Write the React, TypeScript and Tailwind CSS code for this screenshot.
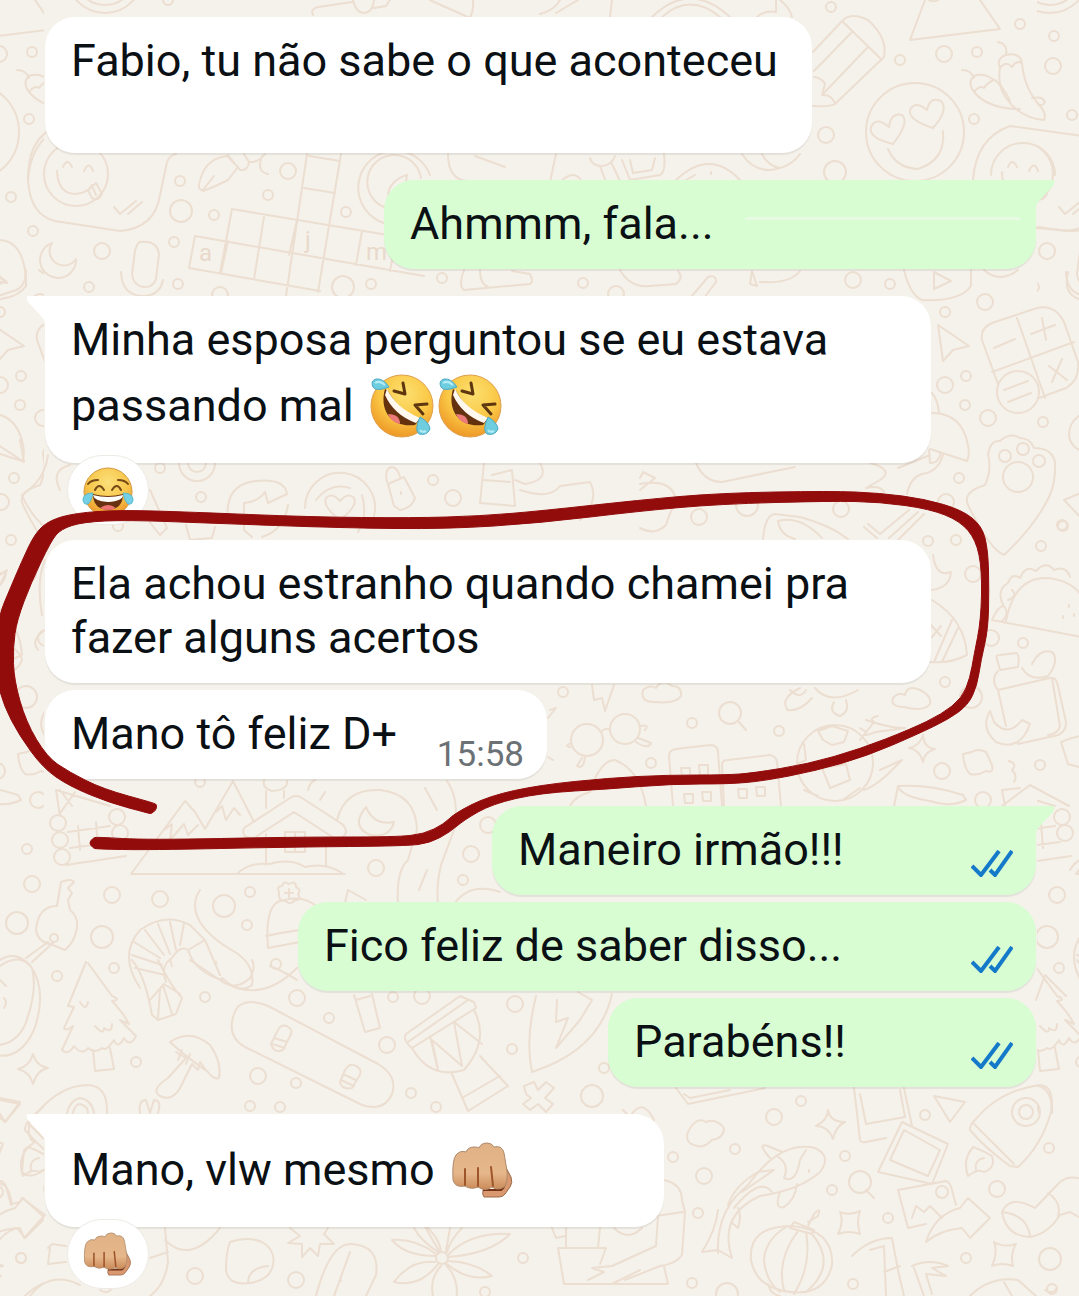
import React from 'react';
import clsx from 'clsx';

type Point = [number, number];

// Smooth closed outline through a ring of points
const outline = (points: Point[]) => {
  const mid = (a: Point, b: Point) => `${(a[0] + b[0]) / 2} ${(a[1] + b[1]) / 2}`;
  const last = points[points.length - 1];
  const curves = points.map((p, i) => `Q${p[0]} ${p[1]} ${mid(p, points[(i + 1) % points.length])}`);
  return `M${mid(last, points[0])} ${curves.join(' ')} Z`;
};

const markerPoints: Point[] = [
  [151, 814], [148, 813], [110, 803], [69, 786], [43, 768], [19, 735], [4, 706], [-3, 680], [-5, 650], [-1, 615], [10, 589],
  [21, 563], [35, 533], [50, 520], [76, 513], [120, 510], [189, 512], [310, 517], [413, 518], [480, 516], [540, 511],
  [640, 500], [720, 493], [830, 491], [880, 493], [925, 499], [962, 510], [982, 526], [988, 550], [989, 590], [988, 630],
  [981, 660], [977, 686], [968, 705], [949, 719], [918, 734], [867, 756], [815, 771], [763, 781], [729, 784], [671, 784],
  [609, 789], [540, 793], [492, 804], [464, 820], [450, 832], [430, 843], [406, 846], [293, 847], [148, 850], [97, 849],
  [93, 848], [89, 843], [93, 838], [97, 837], [148, 840], [293, 837], [396, 837], [424, 834], [444, 824], [455, 813],
  [489, 796], [540, 785], [609, 778], [667, 775], [726, 775], [753, 773], [808, 764], [860, 749], [911, 729], [942, 714],
  [962, 698], [970, 678], [974, 655], [981, 620], [982, 570], [976, 540], [960, 521], [930, 509], [880, 502], [830, 501],
  [720, 504], [640, 511], [540, 523], [448, 529], [344, 528], [207, 523], [127, 520], [83, 522], [61, 529], [51, 541],
  [31, 583], [17, 620], [13, 647], [14, 680], [26, 722], [47, 757], [69, 772], [103, 789], [154, 803], [157, 805], [156, 810],
];

const smallDots: Point[] = [
  [168, 0], [956, 197], [33, 231], [89, 287], [180, 181], [214, 215], [174, 242], [178, 284], [268, 195], [346, 212],
  [371, 284], [442, 278], [831, 7], [900, 60], [977, 52], [1020, 24], [1054, 36], [974, 119], [1072, 115], [583, 283],
  [890, 284], [945, 312], [966, 376], [965, 405], [1043, 422], [959, 478], [928, 541], [956, 540], [1023, 643], [945, 682],
  [1041, 546], [1062, 525], [201, 497], [160, 468], [433, 480], [118, 526], [27, 849], [250, 892], [247, 925], [114, 968],
  [57, 976], [276, 964], [463, 880], [200, 782], [563, 692], [692, 723], [779, 731], [651, 763], [1040, 765],
  [205, 997], [329, 1018], [136, 1062], [296, 1083], [393, 997], [411, 1093], [250, 1106], [280, 1107], [436, 1107],
  [512, 1049], [604, 1068], [21, 1258], [523, 1258], [485, 1292], [801, 1101], [925, 1115], [735, 1149], [673, 1157],
  [845, 1156], [832, 1190], [698, 1213], [888, 1218], [966, 1258], [692, 1283], [853, 1284], [1049, 1148], [1052, 1289],
];

const mediumDots: Point[] = [
  [102, 251], [288, 171], [220, 295], [944, 54], [1053, 66], [826, 135], [853, 280], [616, 294], [985, 302], [945, 385],
  [988, 418], [946, 502], [841, 509], [699, 517], [973, 574], [991, 638], [453, 498], [942, 771], [983, 800], [32, 884],
  [112, 895], [160, 899], [376, 868], [471, 854], [488, 825], [297, 998], [515, 1004], [387, 1045], [258, 1076],
  [774, 1117], [704, 1176], [997, 1189], [296, 1280], [195, 1276], [422, 996],
];

const largeDots: Point[] = [
  [181, 211], [343, 287], [835, 172], [747, 505], [971, 697], [224, 906], [17, 923], [102, 937], [592, 1096], [1050, 1259], [727, 1294],
];

const doodles = [
  // disc, pizza, pencil
  'M67 -25a38 38 0 0 0 76 0M75 -25a30 30 0 0 0 60 0',
  'M925 0L910 40L1000 29L980 0M926 -4a8 8 0 0 0 15 0',
  'M813 52L843 20Q852 12 868 20Q888 38 884 57L835 104Q830 107 813 106M843 22L880 58M852 32L814 71M868 47L822 95M814 77Q822 78 825 84L822 95Q832 94 835 104',
  'M313 15Q310 9 318 7L352 2M353 0Q356 13 364 13Q373 12 374 0M374 8L386 6L390 0M430 0L470 18Q474 10 473 0',
  'M540 14Q555 10 560 0M556 13L578 0M610 17L612 0M652 17Q690 -20 730 17M662 17Q690 -8 720 17M757 17Q765 10 776 12L776 0M780 0Q790 8 792 17',
  // chillies
  'M998 42Q1008 44 1006 54M1000 68Q996 58 1006 55Q1020 52 1022 63Q1016 60 1012 67Q1006 60 1000 68M1000 68Q997 85 1006 98Q1020 118 1044 120Q1047 114 1040 106Q1024 88 1022 63',
  'M962 70Q971 70 974 78M974 92Q967 82 974 76Q984 72 994 80Q988 82 984 88Q980 85 974 92M974 92Q988 109 1020 109M995 80Q1004 88 1010 101M1032 98Q1043 96 1045 102Q1042 107 1038 104',
  // heart eyed face
  'M866 132a49 49 0 1 0 98 0a49 49 0 1 0 -98 0M893 144Q868 138 871 127Q876 116 889 127Q891 112 902 115Q910 122 893 144M933 128Q908 120 910 110Q915 100 927 110Q930 96 941 101Q949 110 933 128M888 149Q896 168 918 169Q946 160 943 131',
  // speech bubble with tongue face
  'M50 130Q28 142 28 180Q30 215 55 221L120 231Q155 228 160 195L167 162Q170 155 176 154M44 174a32 32 0 1 0 64 0a32 32 0 1 0 -64 0M57 171Q58 194 76 194Q88 193 92 185M63 167Q67 157 72 167M84 171Q89 160 93 171M88 190L96 183L102 194Q98 202 92 198Z M93 188L96 195',
  'M114 207L120 214L136 201M128 214L142 202',
  'M973 180Q976 138 1010 126L1083 136M991 175a32 32 0 1 1 64 0M1002 172Q1002 192 1020 194M1008 167Q1012 157 1017 167M1029 171Q1034 160 1038 171M1036 228L1073 231Q1080 231 1085 229',
  // pen nib
  'M200 189Q197 187 203 172Q210 158 227 156L238 167L228 180Q212 188 203 191ZM203 190L214 176M228 155L240 170Q248 171 249 162L244 154M249 162Q258 163 265 154M262 156Q256 172 268 174',
  // crossword
  'M307 154L286 296M341 154L318 292M309 156L340 161M304 188L335 193M232 209L424 241M195 236L424 276M189 268L320 291M232 209L220 273M264 217L254 279M195 236L189 268M362 231L356 265M396 238L390 271M228 241L221 273M297 220L289 255',
  'M52 243a18 18 0 1 0 24 16a14 14 0 0 1 -24 -16',
  'M140 242Q157 240 159 254L156 279Q153 288 143 287Q133 285 132 274L135 251Q137 243 140 242M121 272Q122 295 142 296Q160 296 163 280',
  'M-5 240Q18 238 24 265Q30 288 10 292L-5 297M-5 272L7 283L-5 281',
  'M430 175a37 37 0 1 0 -46 48M421 178a27 27 0 1 0 -34 30M388 195Q390 180 407 175L405 188M448 154Q448 180 468 181M475 156L505 167',
  'M556 154L550 182M590 158Q592 166 602 166Q612 165 615 156M600 166L606 182M612 164L620 181M560 182Q575 168 582 182M622 160L630 180L660 175Q666 172 664 154M630 160L633 173L652 170L655 158M676 180Q710 148 740 180M686 180L695 175M711 172V174M742 154Q752 170 770 170Q790 168 800 154M762 154Q768 166 780 168',
  'M464 270Q458 286 464 290L530 284Q534 282 530 274L512 271M480 270Q480 284 488 287M620 270Q630 288 650 286L676 284Q684 278 678 271M692 296L708 277Q716 274 716 282L704 298M752 271L757 286L750 284ZM760 282Q790 284 800 271M904 270Q910 295 922 300Q960 302 971 286V270M934 272L951 281L934 289ZM984 270Q1000 284 1018 270',
  'M1068 272Q1062 295 1082 300',
  // cursor, calculator
  'M938 325L969 346L953 350L943 361Z',
  'M998 384L982 340Q980 328 992 323L1037 308Q1055 304 1064 322L1078 362Q1080 380 1066 388L1039 398M1017 318L1045 398M992 372L1074 342M994 348L1015 339M1042 318L1046 340M1031 334L1055 325M1049 366L1067 380M1052 382L1062 359M997 392a21 21 0 1 0 42 0a21 21 0 1 0 -42 0M1004 390L1028 381M1008 402L1031 393M1080 415Q1066 425 1070 440Q1074 449 1084 452',
  // umbrella, paw
  'M932 413Q962 413 968 445Q970 455 967 461L930 449M932 393Q938 400 939 413M929 450L930 463Q938 464 941 453M943 455Q938 472 922 474Q910 478 907 494M898 468L930 455',
  'M988 455Q990 440 1000 441Q1010 432 1020 438Q1030 438 1034 448Q1052 448 1055 462Q1056 480 1050 495Q1036 525 1004 555Q990 550 968 505Q962 492 985 485Q992 470 988 455M1003 477a15 15 0 1 0 30 0a15 15 0 1 0 -30 0M999 456a6 6 0 1 0 12 0a6 6 0 1 0 -12 0M1017 449a6 6 0 1 0 12 0a6 6 0 1 0 -12 0M1033 461a6 6 0 1 0 12 0a6 6 0 1 0 -12 0M1083 492L1064 500L1083 520',
  // taco
  'M992 620L1082 637M1006 621Q1014 578 1046 578Q1074 580 1084 600M992 620Q998 606 1004 606Q1010 614 1002 621M1003 605Q996 590 1008 583Q1012 572 1020 578Q1026 564 1036 571Q1046 560 1054 570Q1066 565 1070 577M1012 590Q1018 596 1008 600M1069 605V607M1063 616V618M1074 614V616',
  // jar and banana
  'M997 659Q995 655 1000 655L1016 653Q1020 654 1018 667L1000 670ZM998 671Q990 680 998 690L1050 678Q1056 676 1058 686L1066 722Q1066 734 1054 736L1018 744M1022 668Q1030 682 1048 676Q1060 660 1052 652Q1040 648 1032 664M998 690L1006 726M1052 678L1060 726Q1058 734 1048 735M990 711Q980 728 996 742Q1020 752 1030 724L1022 720Q1008 738 994 722Z',
  'M932 600Q965 620 967 655Q950 664 930 662M952 620L934 662M958 628L942 662M931 625L941 636M941 626L932 637M933 555Q936 578 951 572Q950 588 931 590',
  'M763 539Q765 515 775 514L800 517Q830 525 848 539M778 521Q800 515 822 538M778 521Q780 535 795 539M864 527L877 538M868 524L880 534L909 510M889 538L918 512M898 540L924 514M696 463Q704 482 722 482L795 467M870 463Q895 470 880 480L866 488Q880 485 884 492M640 478L643 472L655 478L640 490M640 484Q672 478 676 500Q670 512 666 525Q655 536 640 528',
  // sticker row under the long message
  'M179 463a18 18 0 0 0 36 0M188 463a9 9 0 0 0 18 0M228 520Q224 485 255 481Q285 478 287 494L268 503L265 492Q258 502 244 503M244 503V530L252 537M288 505Q284 530 262 537M305 508a35 35 0 1 1 69 8M316 500Q330 482 350 488M340 520Q322 506 326 498Q332 492 340 501Q348 492 354 498Q358 506 340 520M362 495Q368 515 358 532',
  'M388 484L404 477L415 498Q412 508 400 510L394 506ZM387 482Q384 468 392 467Q398 468 400 477M401 492V494M484 463L480 503L515 506L512 470L492 475M484 480L510 482M540 463Q550 480 525 484L515 480M520 490Q550 500 560 486L590 482Q600 500 580 520',
  'M48 455Q45 480 22 495Q30 515 48 530M70 465Q50 470 60 490M150 490L167 528L160 535L148 520M186 525L190 540L212 538L215 527M-2 445L24 462L20 440',
  'M-4 578L7 570L0 585M45 560Q36 580 42 615M45 630Q30 640 38 650M0 640Q20 650 22 660Q18 672 0 676',
  // clouds, glasses, loupe
  'M654 702Q640 702 643 690Q650 684 656 688Q662 678 672 686Q682 686 681 696Q676 704 654 702M904 707Q890 707 893 698Q898 692 905 695Q908 684 920 690Q932 696 930 704Q924 712 904 707M719 713a11 11 0 1 0 22 0a11 11 0 1 0 -22 0M739 722L746 730',
  'M571 740a16 16 0 1 0 32 0a16 16 0 1 0 -32 0M610 729a15 15 0 1 0 30 0a15 15 0 1 0 -30 0M602 731Q606 727 610 730M571 743Q564 746 570 747M582 758L577 766Q584 770 585 756M640 726Q650 724 645 730M638 738L651 743Q648 750 636 742M592 685L594 700L602 698L605 711L614 685M550 710L556 708L548 718M548 757L553 760',
  'M673 806L669 756Q669 750 676 749L710 745Q718 745 718 752L722 806M724 806L722 765Q722 760 728 760L770 755Q776 756 777 762L781 806M681 768H690V776H682ZM699 765H708V775H700ZM684 794H693V803H685ZM702 792H711V801H703ZM738 789H747V798H739ZM756 787H765V796H757ZM570 806Q575 796 590 792Q600 760 615 760Q640 770 646 806',
  'M797 763a38 38 0 1 0 76 0a38 38 0 1 0 -76 0M818 731L832 726L848 731L844 742L832 745L823 740ZM822 768L846 764L850 780L830 788ZM797 764L806 760L804 744M804 790L818 796M844 799L860 788M860 740L874 722Q868 718 878 716M860 728L866 732Q860 738 876 732L905 728M866 720Q890 728 903 728M880 770L902 760L888 774Q870 790 862 790M790 690Q800 700 806 690M787 709Q780 698 800 688M787 710Q800 712 812 698M834 702Q828 712 840 716Q850 712 846 700M815 688Q830 706 858 690',
  'M923 735Q924 748 935 749Q924 752 923 762Q920 750 909 748Q920 746 923 735M963 754L972 752Q978 748 986 752L992 765Q994 774 986 771Q978 776 970 774Q964 768 963 754M1009 761Q1018 764 1012 770Q1018 776 1014 782',
  'M894 806L898 786Q930 784 963 795L966 800Q950 808 930 801Q900 796 898 786M1002 790L1020 788M1005 806L1002 790M1002 806L1030 785L1069 806M1061 742Q1076 736 1082 736M1061 742L1068 764L1082 768',
  // log cabin in the mountains
  'M50 823a8 8 0 1 0 16 0a8 8 0 1 0 -16 0M52 840a8 8 0 1 0 16 0a8 8 0 1 0 -16 0M54 857a8 8 0 1 0 16 0a8 8 0 1 0 -16 0M109 817a8 8 0 1 0 16 0a8 8 0 1 0 -16 0M112 833a8 8 0 1 0 16 0a8 8 0 1 0 -16 0M60 816L56 790L110 806M60 790L72 806M68 832L110 826M70 848L115 842M66 865L126 856M78 826L80 850M96 822L98 848M59 815L75 792',
  'M131 874H345M131 874L185 801L195 812L205 829L233 781L254 822M164 830L172 824L170 840L184 824L188 835L198 825M216 812L222 806L226 820L234 808L240 815M244 828L290 798Q296 794 302 798L342 824Q350 832 342 838L334 838L294 812L254 838Q240 838 244 828M266 834V865M326 838V865M238 873Q250 862 270 864Q290 858 305 867Q325 862 342 873M264 780Q262 788 272 791Q288 790 287 781M266 791V808M284 791V798M285 832H305V852H285ZM295 832V852M285 842H305',
  'M337 820Q345 788 380 790Q416 794 417 830Q412 845 408 860Q396 870 398 905M447 781Q460 800 454 830L441 865Q436 885 438 905M366 807Q350 826 370 835Q390 838 394 822Q374 826 366 807M308 790Q310 782 315 780M320 800L325 792M425 788L437 810M427 870L419 890M345 903L348 890L366 900M455 903Q470 882 500 892',
  // key and ring
  'M61 882L57 906Q38 906 36 930Q38 942 50 944L65 950Q74 942 76 932Q80 918 70 910L68 900L72 893L68 888L74 882Q72 878 61 882M50 938a4 4 0 1 0 8 0a4 4 0 1 0 -8 0M54 942L32 962M48 942L26 958M0 960Q15 950 30 965Q48 990 34 1030Q20 1060 -4 1055M0 966Q20 952 32 968Q38 990 25 1025Q15 1045 -4 1045M-2 978L6 986M4 1008Q8 1002 4 998',
  // prawn on a hook
  'M200 890Q190 905 200 922Q210 938 235 952Q255 965 252 985Q240 995 222 978M140 988Q118 955 140 930Q165 912 190 925L205 940L220 975M205 940L188 950Q180 945 172 958Q160 965 166 982M135 968L165 975M132 955L162 965M134 942L160 958M145 930L164 955M158 924L170 954M170 922L176 950M184 923L180 945M188 950Q195 972 222 980M216 962V964',
  // bobble hat
  'M268 948Q264 900 285 900Q305 895 318 908M266 936Q284 932 300 930M268 948L300 942M279 892Q276 886 282 886Q284 880 289 884Q296 880 296 887Q302 890 298 894Q302 900 295 900Q290 906 286 901Q278 902 279 892M289 889V897M285 893H293M270 966Q285 972 297 980',
  // pine tree
  'M86 962L68 1006L74 1007L64 1028Q66 1032 73 1026L62 1050Q68 1056 74 1046Q82 1056 88 1048Q95 1054 102 1048Q106 1052 114 1040Q118 1050 124 1038Q130 1048 136 1036L120 1020L129 1024Q124 1014 112 1001Q122 1000 112 996L88 963M93 1050L95 1071L114 1069L110 1048M80 1002Q86 1012 88 1002M95 1026Q104 1036 104 1028Q112 1034 112 1024',
  'M33 1054Q36 1066 48 1068Q37 1070 33 1084Q30 1072 18 1069Q30 1066 33 1054ZM35 1115Q60 1085 88 1085Q108 1086 107 1113M67 1113Q70 1100 80 1098Q92 1100 94 1113M73 1113Q75 1104 80 1104Q88 1106 88 1113M140 1113Q138 1100 146 1100L150 1113L154 1100Q162 1100 158 1113M0 1100L20 1104L5 1122L-4 1114M30 1120Q26 1140 35 1142L24 1150L22 1172Q30 1180 44 1170M-4 1184Q8 1180 12 1204L20 1202L22 1198L45 1215L24 1238L20 1228Q8 1228 -4 1244',
  // shuttlecock
  'M132 960Q145 975 152 1015L158 1020L176 1014L182 998Q170 985 158 960M150 1000L164 984L180 994M163 985L172 1014M160 990L158 1018M170 960L172 966M190 960L220 980Q235 992 250 978Q256 968 252 960M232 986Q265 1000 297 968',
  // mushroom
  'M170 1042Q190 1028 210 1045Q222 1062 219 1078Q214 1080 208 1072Q185 1056 170 1042M176 1052L186 1058L168 1078Q150 1090 160 1096Q172 1102 180 1088L192 1064L198 1070L200 1062L206 1070M182 1050L178 1060M190 1054L186 1064',
  // skateboard
  'M240 1005Q252 998 272 1008L378 1064Q398 1076 392 1094Q384 1112 362 1105L245 1047Q226 1036 234 1014Q236 1008 240 1005M277 1032Q280 1024 287 1026Q294 1030 290 1036L283 1050Q274 1054 271 1044ZM274 1038L287 1042M272 1044L285 1048M345 1070Q350 1062 356 1066Q364 1070 358 1078L352 1088Q342 1090 340 1082ZM343 1074L356 1080M341 1080L354 1086',
  // djembe
  'M354 995L365 1032L380 1028L372 994M356 1000L370 996M406 1034L460 996L474 1002L476 1008L412 1048Q402 1040 406 1034M408 1042L468 1000M412 1048Q430 1080 464 1070M474 1010Q490 1040 464 1070M430 1036L438 1070L432 1040L462 1066L454 1022L482 1044M452 1074L468 1111L508 1086L480 1056M462 1098L500 1076',
  'M536 996Q525 1040 532 1072Q600 1050 612 994M557 1000L556 1022L568 1018L556 1048L580 1020L592 1000L578 992M526 1094L524 1086L534 1082L538 1090L546 1082L554 1088L545 1098L553 1104L546 1112L538 1104L530 1110L523 1104L531 1098Z',
  // flower, star, pepper
  'M436 1258a6 6 0 1 0 12 0a6 6 0 1 0 -12 0M439 1251Q415 1210 428 1228M438 1252Q420 1240 414 1228M446 1251L450 1228M436 1256Q405 1256 392 1240Q415 1238 436 1254M435 1262Q410 1260 394 1282Q420 1288 438 1264M441 1266Q428 1280 434 1300M446 1265Q460 1280 456 1300M448 1261Q475 1262 492 1276Q468 1282 447 1264M448 1255Q470 1232 510 1234Q490 1254 448 1257M428 1228Q440 1240 441 1252M462 1228Q450 1240 447 1252M290 1228L300 1236L288 1243L302 1244L302 1257L310 1248L318 1256L320 1244L334 1244L324 1234L328 1228M230 1242Q248 1236 262 1242Q276 1250 273 1265Q270 1280 250 1283Q228 1286 226 1270Q226 1252 230 1242M248 1283Q248 1268 268 1266M316 1296Q330 1242 352 1244Q380 1246 376 1275L366 1296M334 1296L350 1252M341 1280V1281M165 1228L168 1262Q165 1285 150 1296M150 1258L168 1252M165 1240Q190 1265 220 1228M48 1248L52 1244L66 1246M50 1248L48 1264L66 1262M30 1296Q50 1270 80 1285M100 1290Q108 1295 112 1288',
  // orca
  'M718 1253Q716 1210 748 1185Q780 1140 815 1148Q832 1156 820 1172Q800 1190 760 1196Q718 1215 732 1258L718 1250L702 1252Q716 1230 718 1210M770 1158Q756 1142 768 1146L782 1152M777 1156Q790 1164 784 1178Q796 1184 800 1160L806 1150M742 1192L774 1170L758 1172Q735 1185 728 1205M734 1208Q760 1176 772 1192M780 1192Q774 1210 784 1207Q795 1200 797 1184M731 1222L738 1228Q742 1216 738 1208M809 1170V1172',
  // lantern
  'M751 1260Q748 1226 792 1226Q834 1230 832 1265Q825 1296 790 1292Q756 1288 751 1260M794 1222L814 1230L812 1234L790 1228ZM808 1226L814 1214Q822 1206 818 1216L808 1222M786 1227Q765 1240 764 1260Q766 1282 780 1292M798 1231Q776 1260 784 1290M806 1232Q812 1265 794 1294M812 1234Q838 1265 806 1292M768 1284Q770 1294 780 1296',
  'M828 1110Q830 1122 845 1122Q836 1126 833 1139Q828 1126 816 1126Q828 1120 828 1110M840 1212Q850 1216 860 1211Q856 1222 860 1234Q848 1230 838 1234Q844 1222 840 1212M994 1242Q1004 1248 1016 1244Q1010 1254 1013 1266Q1002 1262 992 1266Q998 1252 994 1242M698 1146Q684 1144 688 1132Q696 1116 706 1122Q716 1118 724 1128Q724 1138 712 1140Q704 1148 698 1146M849 1182a11 11 0 1 0 22 0a11 11 0 1 0 -22 0M866 1190L874 1198',
  // photos
  'M854 1088L860 1140Q861 1143 866 1142L886 1138M904 1088L912 1126M860 1094L866 1124L905 1117L900 1090M902 1122L948 1144L932 1184L878 1172ZM904 1130L940 1150L928 1176L890 1160ZM898 1190L946 1181Q950 1182 952 1190L956 1205M898 1190L908 1228L926 1224M936 1192a6 6 0 1 0 12 0a6 6 0 1 0 -12 0M912 1218L916 1206L924 1212L930 1206L942 1218M926 1242Q935 1214 960 1208L968 1198L990 1218L970 1238L962 1228Q940 1230 926 1242M934 1096L965 1102L950 1122ZM676 1088L688 1104L765 1088M684 1094L690 1098L730 1090',
  // rocket
  'M975 1120Q1000 1090 1040 1085Q1055 1086 1051 1112Q1042 1145 1018 1167L1010 1166Q985 1148 970 1130Q970 1124 975 1120M974 1124L1014 1164M1012 1112a14 14 0 1 0 28 0a14 14 0 1 0 -28 0M1019 1112a7 7 0 1 0 14 0a7 7 0 1 0 -14 0M973 1147Q982 1150 992 1156Q996 1168 984 1172Q978 1168 968 1176Q962 1160 973 1147M976 1170Q974 1160 984 1158',
  'M1035 1208L1060 1182Q1070 1174 1084 1180M1035 1208Q1010 1194 1002 1212Q1006 1236 1030 1237Q1048 1234 1060 1215L1070 1212L1084 1220M1002 1212Q1028 1215 1030 1237M1048 1193Q1062 1202 1058 1216',
  'M664 1180Q682 1184 682 1200L685 1212L682 1255Q676 1264 660 1266L625 1280M656 1216L683 1212M658 1216L656 1246L612 1266L592 1268L604 1272L588 1280M558 1248H606L600 1264M558 1248L564 1284H668L664 1266M566 1228V1248M600 1228L598 1248M552 1228L556 1238L565 1236M614 1228Q628 1242 642 1228M612 1284L640 1270',
  'M852 1256Q870 1238 892 1238L898 1270L904 1296M870 1250L884 1246L886 1296M912 1266Q930 1258 948 1266L932 1268L946 1276L926 1274L932 1294M914 1268L924 1296M884 1272L900 1266M970 1296Q990 1276 1018 1280L1036 1296M1004 1282L1012 1296',
  'M623 1110L630 1117Q642 1096 654 1120M1036 1000L1045 975L1066 996M1070 870Q1076 860 1082 860',
];

const Wallpaper = () => (
  <svg className="absolute inset-0 h-full w-full" aria-hidden="true">
    <defs>
      <g id="doodles" fill="none" stroke="#ecded1" strokeWidth="2" strokeLinecap="round" strokeLinejoin="round">
        {doodles.map(d => (
          <path key={d} d={d} />
        ))}
        {smallDots.map(([x, y], i) => (
          <circle key={i} cx={x} cy={y} r="5" />
        ))}
        {mediumDots.map(([x, y], i) => (
          <circle key={i} cx={x} cy={y} r="8" />
        ))}
        {largeDots.map(([x, y], i) => (
          <circle key={i} cx={x} cy={y} r="11" />
        ))}
      </g>
    </defs>
    <use href="#doodles" />
    <svg x="0" width="44" height="100%">
      <use href="#doodles" x="-945" />
    </svg>
    <svg x="1037" width="100%" height="100%">
      <use href="#doodles" x="-92" />
    </svg>
    <g fill="#e9d9cb" className="text-2xl">
      <text x="199" y="261">a</text>
      <text x="305" y="248">j</text>
      <text x="366" y="260">m</text>
    </g>
  </svg>
);

const RollingLaugh = () => (
  <svg viewBox="0 0 64 64" className="h-16 w-16" role="img" aria-label="rolando de rir">
    <defs>
      <radialGradient id="rofl" cx="0.55" cy="0.3" r="0.75">
        <stop offset="0" stopColor="#fce070" />
        <stop offset="0.55" stopColor="#fac745" />
        <stop offset="1" stopColor="#ec9122" />
      </radialGradient>
    </defs>
    <circle cx="32" cy="32" r="31" fill="url(#rofl)" stroke="#dfa050" strokeWidth="1" />
    <path d="M15 15C9 36 21 54 45 51L50 45C36 41 26 31 18 17Z" fill="#65320f" />
    <path d="M18 40Q30 40 30 50Q21 48 18 40Z" fill="#ec7a78" />
    <path d="M17 15Q26 34 50 44L46 49Q24 41 15 21Z" fill="#fff8ee" />
    <path d="M24 17L35 20L33 9M57 30L45 31L53 40" fill="none" stroke="#5e360f" strokeWidth="3" strokeLinecap="round" strokeLinejoin="round" />
    <path d="M19 13Q13 4 6 5Q0 7 3 13Q6 18 19 13Z" fill="#6fcde0" stroke="#4ca9c3" strokeWidth="1" />
    <path d="M50 43Q44 56 49 60Q57 62 60 55Q59 48 50 43Z" fill="#6fcde0" stroke="#4ca9c3" strokeWidth="1" />
    <path d="M5 9Q10 6 15 11M50 56Q52 59 56 57" fill="none" stroke="#b5ecf5" strokeWidth="2" />
  </svg>
);

const TearsOfJoy = () => (
  <svg viewBox="0 0 52 52" className="mt-1 h-13 w-13" role="img" aria-label="chorando de rir">
    <defs>
      <radialGradient id="joy" cx="0.5" cy="0.3" r="0.7">
        <stop offset="0" stopColor="#fbe07a" />
        <stop offset="0.6" stopColor="#f8c64a" />
        <stop offset="1" stopColor="#ec962a" />
      </radialGradient>
    </defs>
    <circle cx="26" cy="26" r="24" fill="url(#joy)" stroke="#d3983f" strokeWidth="1" />
    <path d="M6 18Q9 14 16 14M36 14Q43 14 46 18M13 24Q17 16 22 24M30 24Q35 16 39 24" fill="none" stroke="#754916" strokeWidth="2" strokeLinecap="round" />
    <path d="M11 28Q26 32 41 28Q41 43 26 44Q11 43 11 28Z" fill="#68310f" />
    <path d="M11 29Q26 33 41 29Q41 35 26 36Q12 35 11 29Z" fill="#fff" />
    <path d="M18 42Q26 36 34 42Q26 46 18 42Z" fill="#ee7474" />
    <path d="M11 27Q2 27 1 33Q1 39 6 38Q9 36 11 27ZM41 27Q50 27 51 33Q51 39 46 38Q43 36 41 27Z" fill="#74d0e5" stroke="#5ab7cf" strokeWidth="1" />
  </svg>
);

const Fist = ({ className }: { className: string }) => (
  <svg viewBox="0 0 64 56" className={className} role="img" aria-label="soco">
    <defs>
      <linearGradient id="skin" x1="0" y1="0" x2="0" y2="1">
        <stop offset="0" stopColor="#e0b184" />
        <stop offset="0.65" stopColor="#e6b78b" />
        <stop offset="1" stopColor="#cb8a58" />
      </linearGradient>
    </defs>
    <path d="M52 20L60 35Q62 41 59 45L54 52Q52 55 48 55H33Q31 53 32 48L48 47Z" fill="#d99870" stroke="#9b6a49" strokeWidth="1" />
    <path d="M32 48H50Q54 46 54 38" fill="none" stroke="#753214" strokeWidth="2" />
    <path
      d="M2 38Q1 18 5 13Q9 8 15 10Q17 5 23 5Q27 5 28 6Q30 1 36 1Q41 1 43 5Q51 3 53 11L56 29Q57 41 53 45Q47 49 41 45Q34 50 27 45Q20 48 14 44Q4 46 2 38Z"
      fill="url(#skin)"
      stroke="#ae8969"
      strokeWidth="1"
    />
    <path d="M14 27V43M27 26V44M40 25L42 44" fill="none" stroke="#9f552a" strokeWidth="2" strokeLinecap="round" />
  </svg>
);

const ReadTicks = () => (
  <svg viewBox="0 0 42 27" className="h-[27px] w-[42px] shrink-0" role="img" aria-label="Lida" fill="none" stroke="#1479c9" strokeWidth="4">
    <path d="M1 16L10 25L28 1M19 20L24 25L41 1" />
  </svg>
);

const Tail = ({ side }: { side: 'left' | 'right' }) => (
  <svg
    viewBox="0 0 20 28"
    aria-hidden="true"
    className={clsx('absolute top-0 h-7 w-5', side === 'left' ? '-left-[19px] fill-white' : '-right-[19px] -scale-x-100 fill-[#d8fdd2]')}
  >
    <path d="M20 0H2Q-1 1 2 6L16 21Q19 24 19 28H20Z" />
  </svg>
);

interface BubbleProps {
  side: 'left' | 'right';
  tail?: boolean;
  className: string;
  children: React.ReactNode;
}

const Bubble: React.FC<BubbleProps> = ({ side, tail, className, children }) => (
  <div
    className={clsx(
      'relative max-w-full rounded-[30px] pt-[17px] pr-[23px] pl-[26px] shadow-[0_2px_1px_rgba(0,0,0,0.07)]',
      side === 'left' ? 'self-start bg-white' : 'self-end bg-[#d8fdd2]',
      tail && (side === 'left' ? 'rounded-tl-none' : 'rounded-tr-none'),
      className
    )}
  >
    {tail && <Tail side={side} />}
    {children}
  </div>
);

const Reaction = ({ children }: { children: React.ReactNode }) => (
  <button className="absolute top-full left-[22px] -mt-2 flex h-[70px] w-[82px] items-center justify-center rounded-full border border-[#eeebe6] bg-white">
    {children}
  </button>
);

const App: React.FC = () => {
  return (
    <main className="relative min-h-screen overflow-hidden bg-[#f5f2eb] font-['Roboto',sans-serif] text-[45px] leading-[54px] text-[#0a1014]">
      <Wallpaper />

      <div className="relative flex flex-col gap-[27px] pt-[17px] pr-[43px] pb-[67px] pl-[45px]">
        <Bubble side="left" className="w-[767px] pb-[65px]">
          <p>Fabio, tu não sabe o que aconteceu</p>
        </Bubble>

        <Bubble side="right" tail className="w-[652px] pb-[18px]">
          <p>Ahmmm, fala...</p>
          <div className="absolute top-[37px] right-4 h-[3px] w-[275px] rounded-full bg-[#e9fae4]" />
        </Bubble>

        <div className="flex flex-col gap-[7px]">
          <Bubble side="left" tail className="mb-[70px] w-[886px] pb-[30px]">
            <p>Minha esposa perguntou se eu estava</p>
            <div className="flex gap-4 pt-3">
              <p>passando mal</p>
              <div className="-my-2 flex items-center gap-1">
                <RollingLaugh />
                <RollingLaugh />
              </div>
            </div>
            <Reaction>
              <TearsOfJoy />
            </Reaction>
          </Bubble>
          <Bubble side="left" className="w-[886px] pb-[18px]">
            <p>Ela achou estranho quando chamei pra fazer alguns acertos</p>
          </Bubble>
          <Bubble side="left" className="flex w-[502px] items-end justify-between pb-[18px]">
            <p>Mano tô feliz D+</p>
            <time className="-mb-3 text-[35px] leading-[36px] text-[#6b7175]">15:58</time>
          </Bubble>
        </div>

        <div className="flex flex-col gap-[7px]">
          <Bubble side="right" tail className="flex w-[544px] items-end justify-between pb-[18px]">
            <p>Maneiro irmão!!!</p>
            <ReadTicks />
          </Bubble>
          <Bubble side="right" className="flex w-[738px] items-end justify-between pb-[18px]">
            <p>Fico feliz de saber disso...</p>
            <ReadTicks />
          </Bubble>
          <Bubble side="right" className="flex w-[428px] items-end justify-between pb-[18px]">
            <p>Parabéns!!</p>
            <ReadTicks />
          </Bubble>
        </div>

        <Bubble side="left" tail className="w-[619px] pb-[30px]">
          <div className="flex items-center gap-4 pt-3">
            <p>Mano, vlw mesmo</p>
            <Fist className="-my-1 h-14 w-16" />
          </div>
          <Reaction>
            <Fist className="h-11 w-[50px]" />
          </Reaction>
        </Bubble>
      </div>

      {/* hand-drawn marker around the highlighted messages */}
      <svg className="pointer-events-none absolute inset-0 h-full w-full" aria-hidden="true">
        <path d={outline(markerPoints)} fill="#920c0c" stroke="#920c0c" />
      </svg>
    </main>
  );
};

export default App;
